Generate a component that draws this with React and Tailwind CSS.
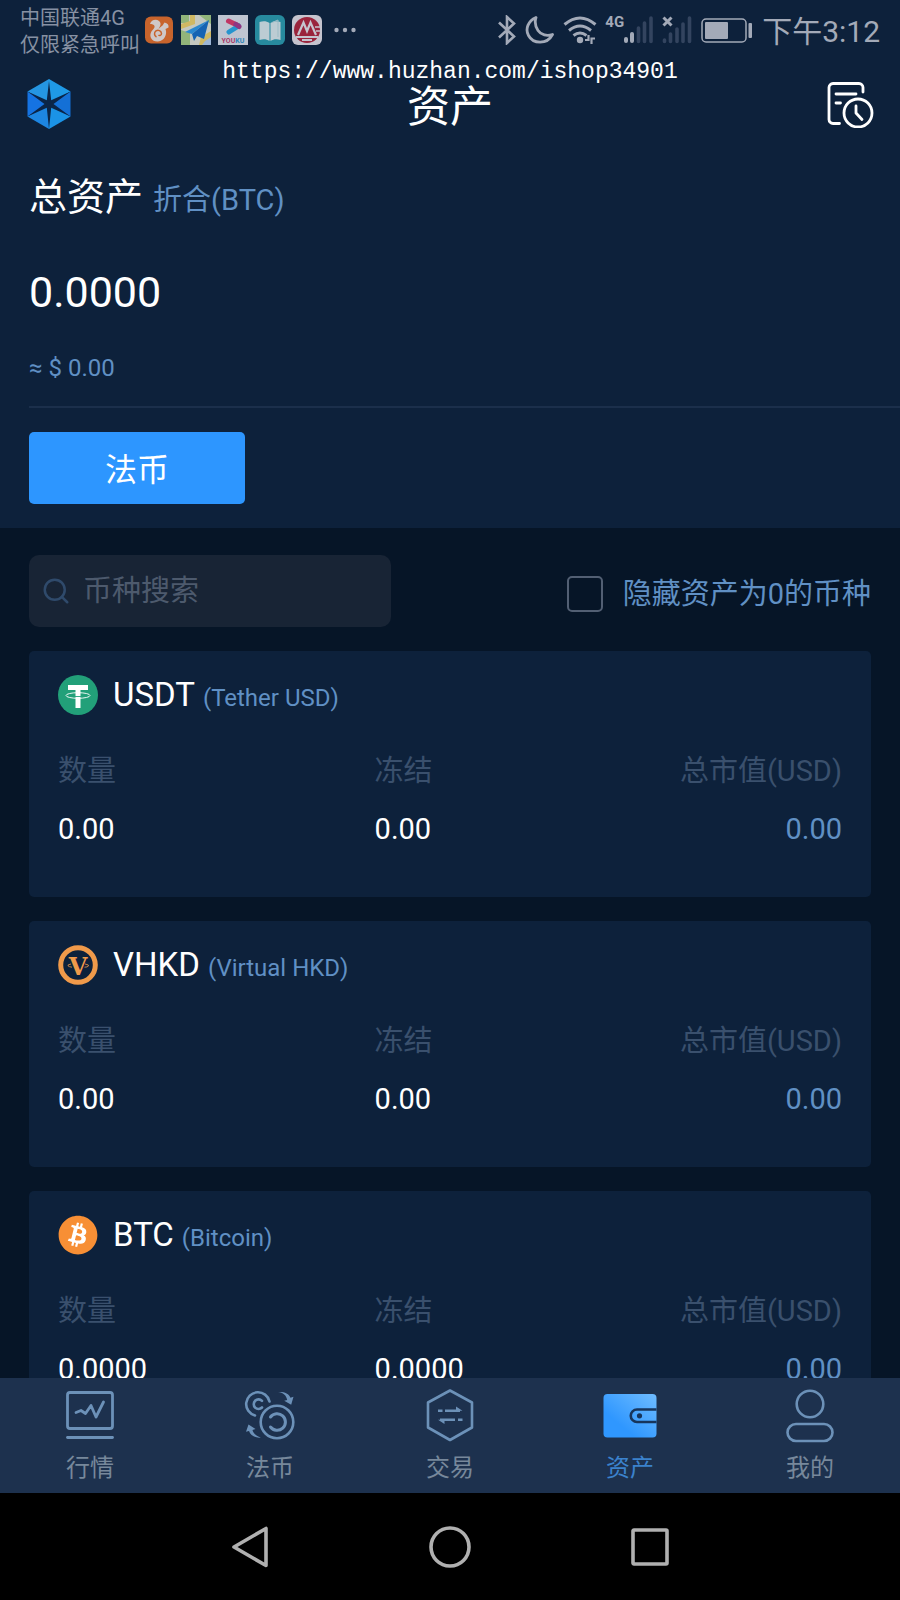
import { useState } from "react";
import { Search } from "lucide-react";
import { FaBitcoin } from "react-icons/fa";

const ASSETS = [
  { symbol: "USDT", name: "Tether USD", icon: TetherIcon, amount: "0.00", frozen: "0.00", value: "0.00" },
  { symbol: "VHKD", name: "Virtual HKD", icon: VhkdIcon, amount: "0.00", frozen: "0.00", value: "0.00" },
  { symbol: "BTC", name: "Bitcoin", icon: BitcoinIcon, amount: "0.0000", frozen: "0.0000", value: "0.00" },
];

const TABS = [
  { key: "market", label: "行情", icon: MarketIcon },
  { key: "fiat", label: "法币", icon: FiatIcon },
  { key: "trade", label: "交易", icon: TradeIcon },
  { key: "assets", label: "资产", icon: WalletIcon },
  { key: "mine", label: "我的", icon: UserIcon },
];

/* ---------- coin icons ---------- */

function TetherIcon() {
  return (
    <svg viewBox="0 0 40 40" className="h-10 w-10 shrink-0" aria-hidden="true">
      <circle cx="20" cy="20" r="20" fill="#22a079" />
      <rect x="10" y="10" width="20" height="5" fill="#fff" />
      <rect x="17.5" y="10" width="5" height="23" fill="#fff" />
      <ellipse cx="20" cy="20.5" rx="12" ry="2.8" fill="none" stroke="#fff" strokeWidth="0.9" />
      <path d="M17 21.500h6" stroke="#22a079" strokeWidth="0.9" />
    </svg>
  );
}

function VhkdIcon() {
  return (
    <svg viewBox="0 0 40 40" className="h-10 w-10 shrink-0" aria-hidden="true">
      <circle cx="20" cy="20" r="17.3" fill="none" stroke="#f09a4a" strokeWidth="5" />
      <text x="20" y="30" textAnchor="middle" fontSize="24" fontWeight="700" fontFamily="DejaVu Serif, serif" fill="#f09a4a">
        V
      </text>
      <path d="M13 19q-4 .8-3 1.800t4 1.400M27 19q4.500 .8 3.500 2t-4 1.200" fill="none" stroke="#f09a4a" strokeWidth="0.8" />
    </svg>
  );
}

function BitcoinIcon() {
  return (
    <span className="grid h-10 w-10 shrink-0 place-items-center rounded-full bg-[radial-gradient(circle,#ffffff_60%,transparent_61%)]">
      <FaBitcoin className="h-10 w-10 text-[#f78f35]" aria-hidden="true" />
    </span>
  );
}

/* ---------- tab icons ---------- */

function MarketIcon() {
  return (
    <svg viewBox="0 0 54 54" className="h-[54px] w-[54px]" fill="none" stroke="currentColor" strokeWidth="2.8" strokeLinecap="round" strokeLinejoin="round" aria-hidden="true">
      <rect x="4.500" y="3.500" width="45" height="36" rx="2.500" />
      <path d="M13 23.500l5-2 4.500 3 5.500-8 5 11.500 7.500-15" />
      <path d="M4.500 48.500h45" />
    </svg>
  );
}

function FiatIcon() {
  return (
    <svg viewBox="0 0 54 54" className="h-[54px] w-[54px]" fill="none" stroke="currentColor" strokeWidth="2.600" strokeLinecap="round" aria-hidden="true">
      <path d="M12 26.500A11.800 11.800 0 1 1 26.500 12.500" />
      <path d="M19 18.500A4.800 4.800 0 1 1 19 11.800" />
      <circle cx="34" cy="33" r="16.300" />
      <path d="M27.500 28a8.300 8.300 0 1 1 0 10" strokeWidth="3" />
      <path d="M35 3c5 .5 8.500 3.500 9.200 8l-3 .8 7 4 2.300-8-3 .9C46 4.500 41 2.500 35 3z" fill="currentColor" stroke="none" />
      <path d="M18 48.500c-5.500.8-10.500-2-12-6.500l-3 .8 2.500-7.300 7 4.500-3 .9c.8 3.400 4 6.600 8.500 7.600z" fill="currentColor" stroke="none" />
    </svg>
  );
}

function TradeIcon() {
  return (
    <svg viewBox="0 0 54 54" className="h-[54px] w-[54px]" fill="none" stroke="currentColor" strokeWidth="2.600" strokeLinejoin="round" aria-hidden="true">
      <path d="M27 1.500 49 13.500v25L27 51 5 38.500v-25z" />
      <path d="M15 21.800h4.500M22 21.800h15M39.500 30.800H35M32 30.800H17" />
      <path d="M33 17.500v4.300h6.500zM21.500 35v-4.300H15z" fill="currentColor" stroke="none" />
    </svg>
  );
}

function WalletIcon() {
  return (
    <svg viewBox="0 0 54 54" className="h-[54px] w-[54px]" aria-hidden="true">
      <defs>
        <linearGradient id="wallet" x1="0.300" y1="0.700" x2="1" y2="0">
          <stop offset="0" stopColor="#2f97ff" />
          <stop offset="1" stopColor="#6fbcff" />
        </linearGradient>
      </defs>
      <rect x="0.500" y="5" width="53" height="43.500" rx="4" fill="url(#wallet)" />
      <path d="M53.500 20.500H34a6 6 0 0 0 0 12.500h19.500" fill="none" stroke="#17355c" strokeWidth="2.600" />
      <circle cx="36.500" cy="26.800" r="2.600" fill="#17355c" />
    </svg>
  );
}

function UserIcon() {
  return (
    <svg viewBox="0 0 54 54" className="h-[54px] w-[54px]" fill="none" stroke="currentColor" strokeWidth="2.600" aria-hidden="true">
      <circle cx="27" cy="15" r="13.300" />
      <rect x="4.500" y="35" width="45" height="17" rx="8.500" />
    </svg>
  );
}

/* ---------- status bar ---------- */

function AppIcons() {
  return (
    <div className="flex items-center gap-[7px] opacity-85" aria-hidden="true">
      <svg viewBox="0 0 30 30" className="h-[30px] w-[30px]">
        <rect x="1" y="1.500" width="28" height="27" rx="6" fill="#e9702a" />
        <path
          d="M6 9c1-4 6-5.500 9-3 3 2.500 1 5.500-.5 8 2-2.500 4.500-3 5-5l1-1.500c3 .5 4.500 2.500 4 5l-3 1.500c2 5-1 12-7.500 12.500C8 27 5 22 7 17.500c1-2.500 4-4 3.500-6.500C10 9.500 8 9 6 9z"
          fill="#f1e6e0"
        />
        <path d="M12.500 22a3.500 3.500 0 1 1 5-3.500c0 2-2 2.500-3 1.500" fill="none" stroke="#e9702a" strokeWidth="1.500" />
      </svg>
      <svg viewBox="0 0 30 30" className="h-[30px] w-[30px]">
        <rect width="30" height="30" fill="#e4e6d8" />
        <path d="M0 0h8v8H0zM18 0h12v9zM0 15l9 3v12H0z" fill="#a9cf86" />
        <path d="M9 0h5v9L0 14V9l9-3zM20 22l10-6v8l-7 6h-5z" fill="#f1d36b" />
        <path d="M24 26l6-4v8h-9z" fill="#b5cff0" />
        <path d="M28 5 4 17l7 2z" fill="#2f9bea" />
        <path d="M28 5 11 19l2 7 3-5 7 3z" fill="#176fc9" />
      </svg>
      <svg viewBox="0 0 30 30" className="h-[30px] w-[30px]">
        <rect width="30" height="30" fill="#dde1ea" />
        <path d="M10.500 6 20 10.500" stroke="#e03a6c" strokeWidth="5" strokeLinecap="round" />
        <path d="M20.500 11 11 17" stroke="#2ba9e8" strokeWidth="5" strokeLinecap="round" />
        <path d="M18 9.500 21 11.500" stroke="#a6398f" strokeWidth="5" strokeLinecap="round" />
        <text x="15" y="27.500" textAnchor="middle" fontSize="7" fontWeight="700" fontFamily="Roboto, sans-serif" fill="#c63f72">
          YOU<tspan fill="#3598d2">KU</tspan>
        </text>
      </svg>
      <svg viewBox="0 0 30 30" className="h-[30px] w-[30px]">
        <rect width="30" height="30" rx="6" fill="#2c9db0" />
        <path d="M4.500 7c4-1.500 7-1 10 1v18c-3-2-6-2.500-10-1zM25.500 7c-4-1.500-7-1-10 1v18c3-2 6-2.500 10-1z" fill="#dbeaee" />
        <path d="M17 7.500 23 5v17" fill="none" stroke="#b5d8df" />
      </svg>
      <svg viewBox="0 0 30 30" className="h-[30px] w-[30px]">
        <rect width="30" height="30" rx="6" fill="#e6e1e8" />
        <circle cx="15" cy="15" r="13" fill="#b3253d" />
        <path d="M6 20 11.500 7.500 15 16l3.500-8.500L24 20M4 22h22M10 25h10" fill="none" stroke="#e6e1e8" strokeWidth="2.200" />
        <path d="M23 12h5M24 16h4" stroke="#e6e1e8" strokeWidth="1.500" />
      </svg>
    </div>
  );
}

function SignalIcons() {
  return (
    <div className="flex items-center gap-2 text-[#a3aab8]" aria-hidden="true">
      <svg viewBox="0 0 20 30" className="h-[30px] w-5" fill="none" stroke="currentColor" strokeWidth="2.600">
        <path d="M2 7.500 17 21.500 10 28V2l7 6.500L2 22.500" />
      </svg>
      <svg viewBox="0 0 30 30" className="h-[30px] w-[30px]" fill="none" stroke="currentColor" strokeWidth="2.800" strokeLinejoin="round">
        <path d="M11 2.500C3 6 0 14 3.500 20.500 8 29 22 30 27.500 19.500 22 21.500 16 20 13 15.500 10 11 9.500 7 11 2.500z" />
      </svg>
      <svg viewBox="0 0 34 30" className="h-[30px] w-[34px]" fill="none" stroke="currentColor" strokeWidth="3">
        <path d="M1.500 9.500q15.500-13 31 0M6 15.500q11-9 22 0M10.500 20.500q6.500-5 13 0" />
        <circle cx="17" cy="25" r="3.200" fill="currentColor" stroke="none" />
        <path d="M22 25h3.500v-5M28.500 29v-5.500H32" strokeWidth="2.200" />
      </svg>
      <div className="flex items-start">
        <span className="font-[Roboto] text-[15px] leading-[15px] font-bold">4G</span>
        <svg viewBox="0 0 30 30" className="h-[30px] w-[30px]">
          <rect x="0" y="22" width="4" height="6" rx="2" fill="currentColor" />
          <rect x="6" y="17" width="4" height="11" rx="2" fill="currentColor" />
          <path d="M14.500 13v13.500M20.500 8v18.500M27 3v23.500" stroke="#33445f" strokeWidth="3.600" strokeLinecap="round" />
        </svg>
      </div>
      <svg viewBox="0 0 30 30" className="h-[30px] w-[30px]">
        <path d="M1.500 2.500l8 8M9.500 2.500l-8 8" stroke="currentColor" strokeWidth="3" />
        <path d="M2.500 25v1.500M8.500 19v7.500M15 14v12.500M21 9v17.500M27.500 3v23.500" stroke="#33445f" strokeWidth="3.600" strokeLinecap="round" />
      </svg>
      <svg viewBox="0 0 54 30" className="h-[30px] w-[54px]">
        <rect x="2" y="4" width="44" height="23" rx="4" fill="none" stroke="currentColor" strokeWidth="1.500" />
        <rect x="5" y="7" width="23" height="17" rx="1" fill="currentColor" />
        <rect x="48.500" y="8" width="3.500" height="15" rx="1" fill="currentColor" />
      </svg>
    </div>
  );
}

function StatusBar() {
  return (
    <div className="flex h-[60px] items-center justify-between px-5">
      <div className="flex items-center gap-1">
        <div className="w-[120px] pt-1 text-[20px] leading-[27px] whitespace-nowrap text-[#8791a3]">
          <div>中国联通4G</div>
          <div>仅限紧急呼叫</div>
        </div>
        <AppIcons />
        <svg viewBox="0 0 22 6" className="ml-2 h-[6px] w-[22px]" fill="#a3aab8" aria-hidden="true">
          <circle cx="2.500" cy="3" r="2.200" />
          <circle cx="11" cy="3" r="2.200" />
          <circle cx="19.500" cy="3" r="2.200" />
        </svg>
      </div>
      <div className="flex items-center gap-2">
        <SignalIcons />
        <span className="pt-1 text-[30px] leading-[40px] whitespace-nowrap text-[#a3aab8]">下午3:12</span>
      </div>
    </div>
  );
}

function Header() {
  return (
    <header className="relative grid h-[88px] grid-cols-[1fr_auto_1fr] items-center px-[26px]">
      <svg viewBox="0 0 46 50" className="h-[50px] w-[46px]" aria-hidden="true">
        <path d="M23 0 44.500 12.500 23 25z" fill="#1f9ae6" />
        <path d="M44.500 12.500v25L23 25z" fill="#1470d6" />
        <path d="M44.500 37.500 23 50V25z" fill="#1b93e6" />
        <path d="M23 50 1.500 37.500 23 25z" fill="#1d86e2" />
        <path d="M1.500 37.500v-25L23 25z" fill="#1573e2" />
        <path d="M1.500 12.500 23 0v25z" fill="#2596e2" />
        <path
          d="M23 2l2.200 19.200L44.500 12.500 27.500 25 44.500 37.500 25.200 28.800 23 50 20.800 28.800 1.500 37.500 18.500 25 1.500 12.500 20.800 21.200z"
          fill="#0b2547"
        />
      </svg>
      <h1 className="pt-[6px] text-[43px] leading-[56px] text-white">资产</h1>
      <button type="button" aria-label="资产记录" className="justify-self-end text-white">
        <svg viewBox="0 0 48 48" className="h-12 w-12" fill="none" stroke="currentColor" strokeWidth="2.800" strokeLinecap="round" strokeLinejoin="round" aria-hidden="true">
          <path d="M13.500 43.500H7a4 4 0 0 1-4-4v-32a4 4 0 0 1 4-4h26a4 4 0 0 1 4 4V12" />
          <path d="M10 14h20M10 23h4.500" />
          <circle cx="32" cy="33" r="14" />
          <path d="M30 26v7l6 6.500" />
        </svg>
      </button>
      {/* site address stamped over the top of the header */}
      <p className="pointer-events-none absolute inset-x-0 -top-[2px] text-center font-['Liberation_Mono',monospace] text-[23px] leading-[28px] text-white">
        https://www.huzhan.com/ishop34901
      </p>
    </header>
  );
}

function Summary() {
  return (
    <section>
      <div className="pl-[29px]">
        <h2 className="flex items-baseline gap-[10px] pt-[21px] leading-[56px]">
          <span className="text-[38px] text-white">总资产</span>
          <span className="text-[29px] text-[#6090c4]">折合(BTC)</span>
        </h2>
        <p className="pt-9 text-[43px] leading-[56px] text-white">0.0000</p>
        <p className="border-b-2 border-[#1b2f4b] pt-8 pb-[22px] text-[24px] leading-[32px] text-[#6090c4]">≈ $ 0.00</p>
      </div>
      <div className="px-[29px] py-6">
        <button type="button" className="h-[72px] w-[216px] rounded-[5px] bg-[#2d96ff] pt-1 text-[32px] leading-[40px] text-white">
          法币
        </button>
      </div>
    </section>
  );
}

function AssetCard({ asset }) {
  const Icon = asset.icon;
  return (
    <li className="h-[246px] shrink-0 rounded-[5px] bg-[#0d213b] px-[29px] pt-6">
      <div className="flex h-10 items-start">
        <Icon />
        <h3 className="ml-[15px] flex items-baseline gap-2 leading-[40px]">
          <span className="text-[33px] text-white">{asset.symbol}</span>
          <span className="text-[24px] text-[#6090c4]">({asset.name})</span>
        </h3>
      </div>
      <dl className="mt-9 grid grid-cols-[21fr_15fr_16fr] text-[29px] leading-[40px] whitespace-nowrap">
        <div>
          <dt className="text-[#3a506d]">数量</dt>
          <dd className="mt-[18px] text-white">{asset.amount}</dd>
        </div>
        <div>
          <dt className="text-[#3a506d]">冻结</dt>
          <dd className="mt-[18px] text-white">{asset.frozen}</dd>
        </div>
        <div className="text-right">
          <dt className="text-[#3a506d]">总市值(USD)</dt>
          <dd className="mt-[18px] text-[#6090c4]">{asset.value}</dd>
        </div>
      </dl>
    </li>
  );
}

function TabBar({ active, onChange }) {
  return (
    <nav className="grid h-[115px] shrink-0 grid-cols-5 bg-[#1d314e]">
      {TABS.map(({ key, label, icon: Icon }) => (
        <button key={key} type="button" onClick={() => onChange(key)} className="flex flex-col items-center gap-[9px] pt-[11px] text-[#6c91b8]">
          <Icon />
          <span className={key === active ? "text-[24px] leading-[32px] text-[#3b82cc]" : "text-[24px] leading-[32px] text-[#77889b]"}>
            {label}
          </span>
        </button>
      ))}
    </nav>
  );
}

function SystemNav() {
  return (
    <div className="flex h-[107px] shrink-0 items-center justify-center gap-[156px] bg-black text-[#b0b0b0]">
      <button type="button" aria-label="返回">
        <svg viewBox="0 0 44 44" className="h-11 w-11" fill="none" stroke="currentColor" strokeWidth="3.600" strokeLinejoin="round">
          <path d="M38 3.500v37L6 22z" />
        </svg>
      </button>
      <button type="button" aria-label="主屏幕">
        <svg viewBox="0 0 44 44" className="h-11 w-11" fill="none" stroke="currentColor" strokeWidth="3.600">
          <circle cx="22" cy="22" r="19" />
        </svg>
      </button>
      <button type="button" aria-label="最近任务">
        <svg viewBox="0 0 44 44" className="h-11 w-11" fill="none" stroke="currentColor" strokeWidth="3.600" strokeLinejoin="round">
          <rect x="5" y="5" width="34" height="34" rx="1" />
        </svg>
      </button>
    </div>
  );
}

export default function App() {
  const [query, setQuery] = useState("");
  const [hideEmpty, setHideEmpty] = useState(false);
  const [tab, setTab] = useState("assets");

  const rows = ASSETS.filter(
    (a) => a.symbol.toLowerCase().includes(query.trim().toLowerCase()) && !(hideEmpty && Number(a.amount) === 0),
  );

  return (
    <div className="flex h-screen flex-col overflow-hidden bg-[#061527] font-[Roboto,'Noto_Sans_CJK_SC',sans-serif]">
      <div className="shrink-0 bg-[#0d213b]">
        <StatusBar />
        <Header />
        <Summary />
      </div>

      <main className="min-h-0 flex-1 overflow-y-auto px-[29px] pt-[27px] [scrollbar-width:none]">
        <div className="flex items-center justify-between">
          <label className="flex h-[72px] w-[362px] items-center gap-3 rounded-[10px] bg-[#182435] px-3">
            <Search className="h-[30px] w-[30px] shrink-0 text-[#2f4a6b]" strokeWidth={2} aria-hidden="true" />
            <input
              type="text"
              value={query}
              onChange={(e) => setQuery(e.target.value)}
              placeholder="币种搜索"
              aria-label="币种搜索"
              className="w-full min-w-0 bg-transparent text-[29px] leading-[40px] text-white outline-none placeholder:text-[#4d5a6d]"
            />
          </label>
          <label className="flex items-center gap-5 pt-[6px] text-[29px] leading-[40px] whitespace-nowrap text-[#6090c4]">
            <input
              type="checkbox"
              checked={hideEmpty}
              onChange={(e) => setHideEmpty(e.target.checked)}
              className="h-9 w-9 appearance-none rounded-[5px] border-2 border-[#525f73] checked:bg-[#2d96ff]"
            />
            隐藏资产为0的币种
          </label>
        </div>

        <ul className="mt-6 flex flex-col gap-6">
          {rows.map((asset) => (
            <AssetCard key={asset.symbol} asset={asset} />
          ))}
        </ul>
      </main>

      <TabBar active={tab} onChange={setTab} />
      <SystemNav />
    </div>
  );
}
